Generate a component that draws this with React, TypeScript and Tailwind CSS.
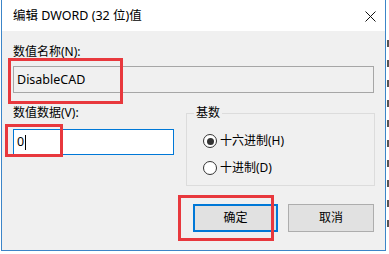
import React from "react";

const font = "font-[Noto_Sans,Noto_Sans_CJK_SC,sans-serif]";

const Radio: React.FC<{ checked?: boolean; label: string }> = ({ checked, label }) => (
  <div className="flex items-center h-[16px] pl-[16px]">
    <span className="w-[14px] h-[14px] rounded-full border border-[#333333] bg-white flex items-center justify-center">
      {checked && <span className="w-[7px] h-[7px] rounded-full bg-[#333333]" />}
    </span>
    <span className="ml-[3px] text-[12px] leading-[16px] text-black">{label}</span>
  </div>
);

const App: React.FC = () => {
  return (
    <div className={`relative w-[389px] h-[254px] bg-white overflow-hidden flex ${font}`}>
      {/* Dialog window */}
      <div className="ml-[1px] w-[385px] h-[251px] border border-t-0 border-[#3c85c8] flex flex-col shrink-0">
        {/* Title bar */}
        <div className="h-[31px] bg-white flex items-center justify-between pl-[11px] pr-[9px]">
          <span className="text-[12.5px] leading-[16px] text-black">编辑 DWORD (32 位)值</span>
          <svg width="11" height="11" viewBox="0 0 11 11" className="mt-[1px]">
            <path d="M0.5 0.5 L10.5 10.5 M10.5 0.5 L0.5 10.5" stroke="#111" strokeWidth="1" />
          </svg>
        </div>

        {/* Body */}
        <div className="flex-1 bg-[#f0f0f0] pl-[11px] pr-[10px] flex flex-col">
          <div className="mt-[13px] text-[12px] leading-[16px] text-black">数值名称(N):</div>
          <div className="mt-[6px] h-[27px] w-[361px] border border-[#a6a6a6] bg-[#f0f0f0] flex items-center pl-[3px]">
            <span className="text-[12.5px] leading-[16px] text-black">DisableCAD</span>
          </div>

          <div className="mt-[12px] flex">
            <div className="flex flex-col">
              <div className="text-[12px] leading-[16px] text-black">数值数据(V):</div>
              <div className="mt-[8px] h-[26px] w-[161px] border border-[#0078d7] bg-white flex items-center pl-[3px]">
                <span className="text-[12.5px] leading-[16px] text-black">0</span>
                <span className="ml-[1px] w-[1px] h-[15px] bg-black" />
              </div>
            </div>

            <fieldset className="ml-[12px] w-[189px] h-[81px] border border-[#dcdcdc]">
              <legend className="ml-[7px] px-[2px] text-[12px] leading-[16px] text-black">基数</legend>
              <div className="mt-[12px] flex flex-col gap-[11px]">
                <Radio checked label="十六进制(H)" />
                <Radio label="十进制(D)" />
              </div>
            </fieldset>
          </div>

          <div className="mt-[18px] flex justify-end pr-[1px]">
            <button className="w-[85px] h-[28px] border-2 border-[#0078d7] bg-[#e1e1e1] text-[12px] text-black flex items-center justify-center">
              确定
            </button>
            <button className="ml-[10px] w-[86px] h-[28px] border border-[#adadad] bg-[#e1e1e1] text-[12px] text-black flex items-center justify-center">
              取消
            </button>
          </div>
        </div>
      </div>

      {/* Background peeking at the right: fragments of a list behind the dialog */}
      <div className="w-[3px] pt-[40px] flex flex-col gap-[13px]">
        {Array.from({ length: 10 }).map((_, i) => (
          <div key={i} className="ml-[1px] w-[2px] h-[7px] bg-[#555]" />
        ))}
      </div>

      {/* Red annotation boxes */}
      <div className="absolute left-[8px] top-[58px] w-[115px] h-[46px] border-[3px] border-[#e8383d]" />
      <div className="absolute left-[5px] top-[124px] w-[58px] h-[33px] border-[3px] border-[#e8383d]" />
      <div className="absolute left-[178px] top-[195px] w-[96px] h-[46px] border-[3px] border-[#e8383d]" />
    </div>
  );
};

export default App;
